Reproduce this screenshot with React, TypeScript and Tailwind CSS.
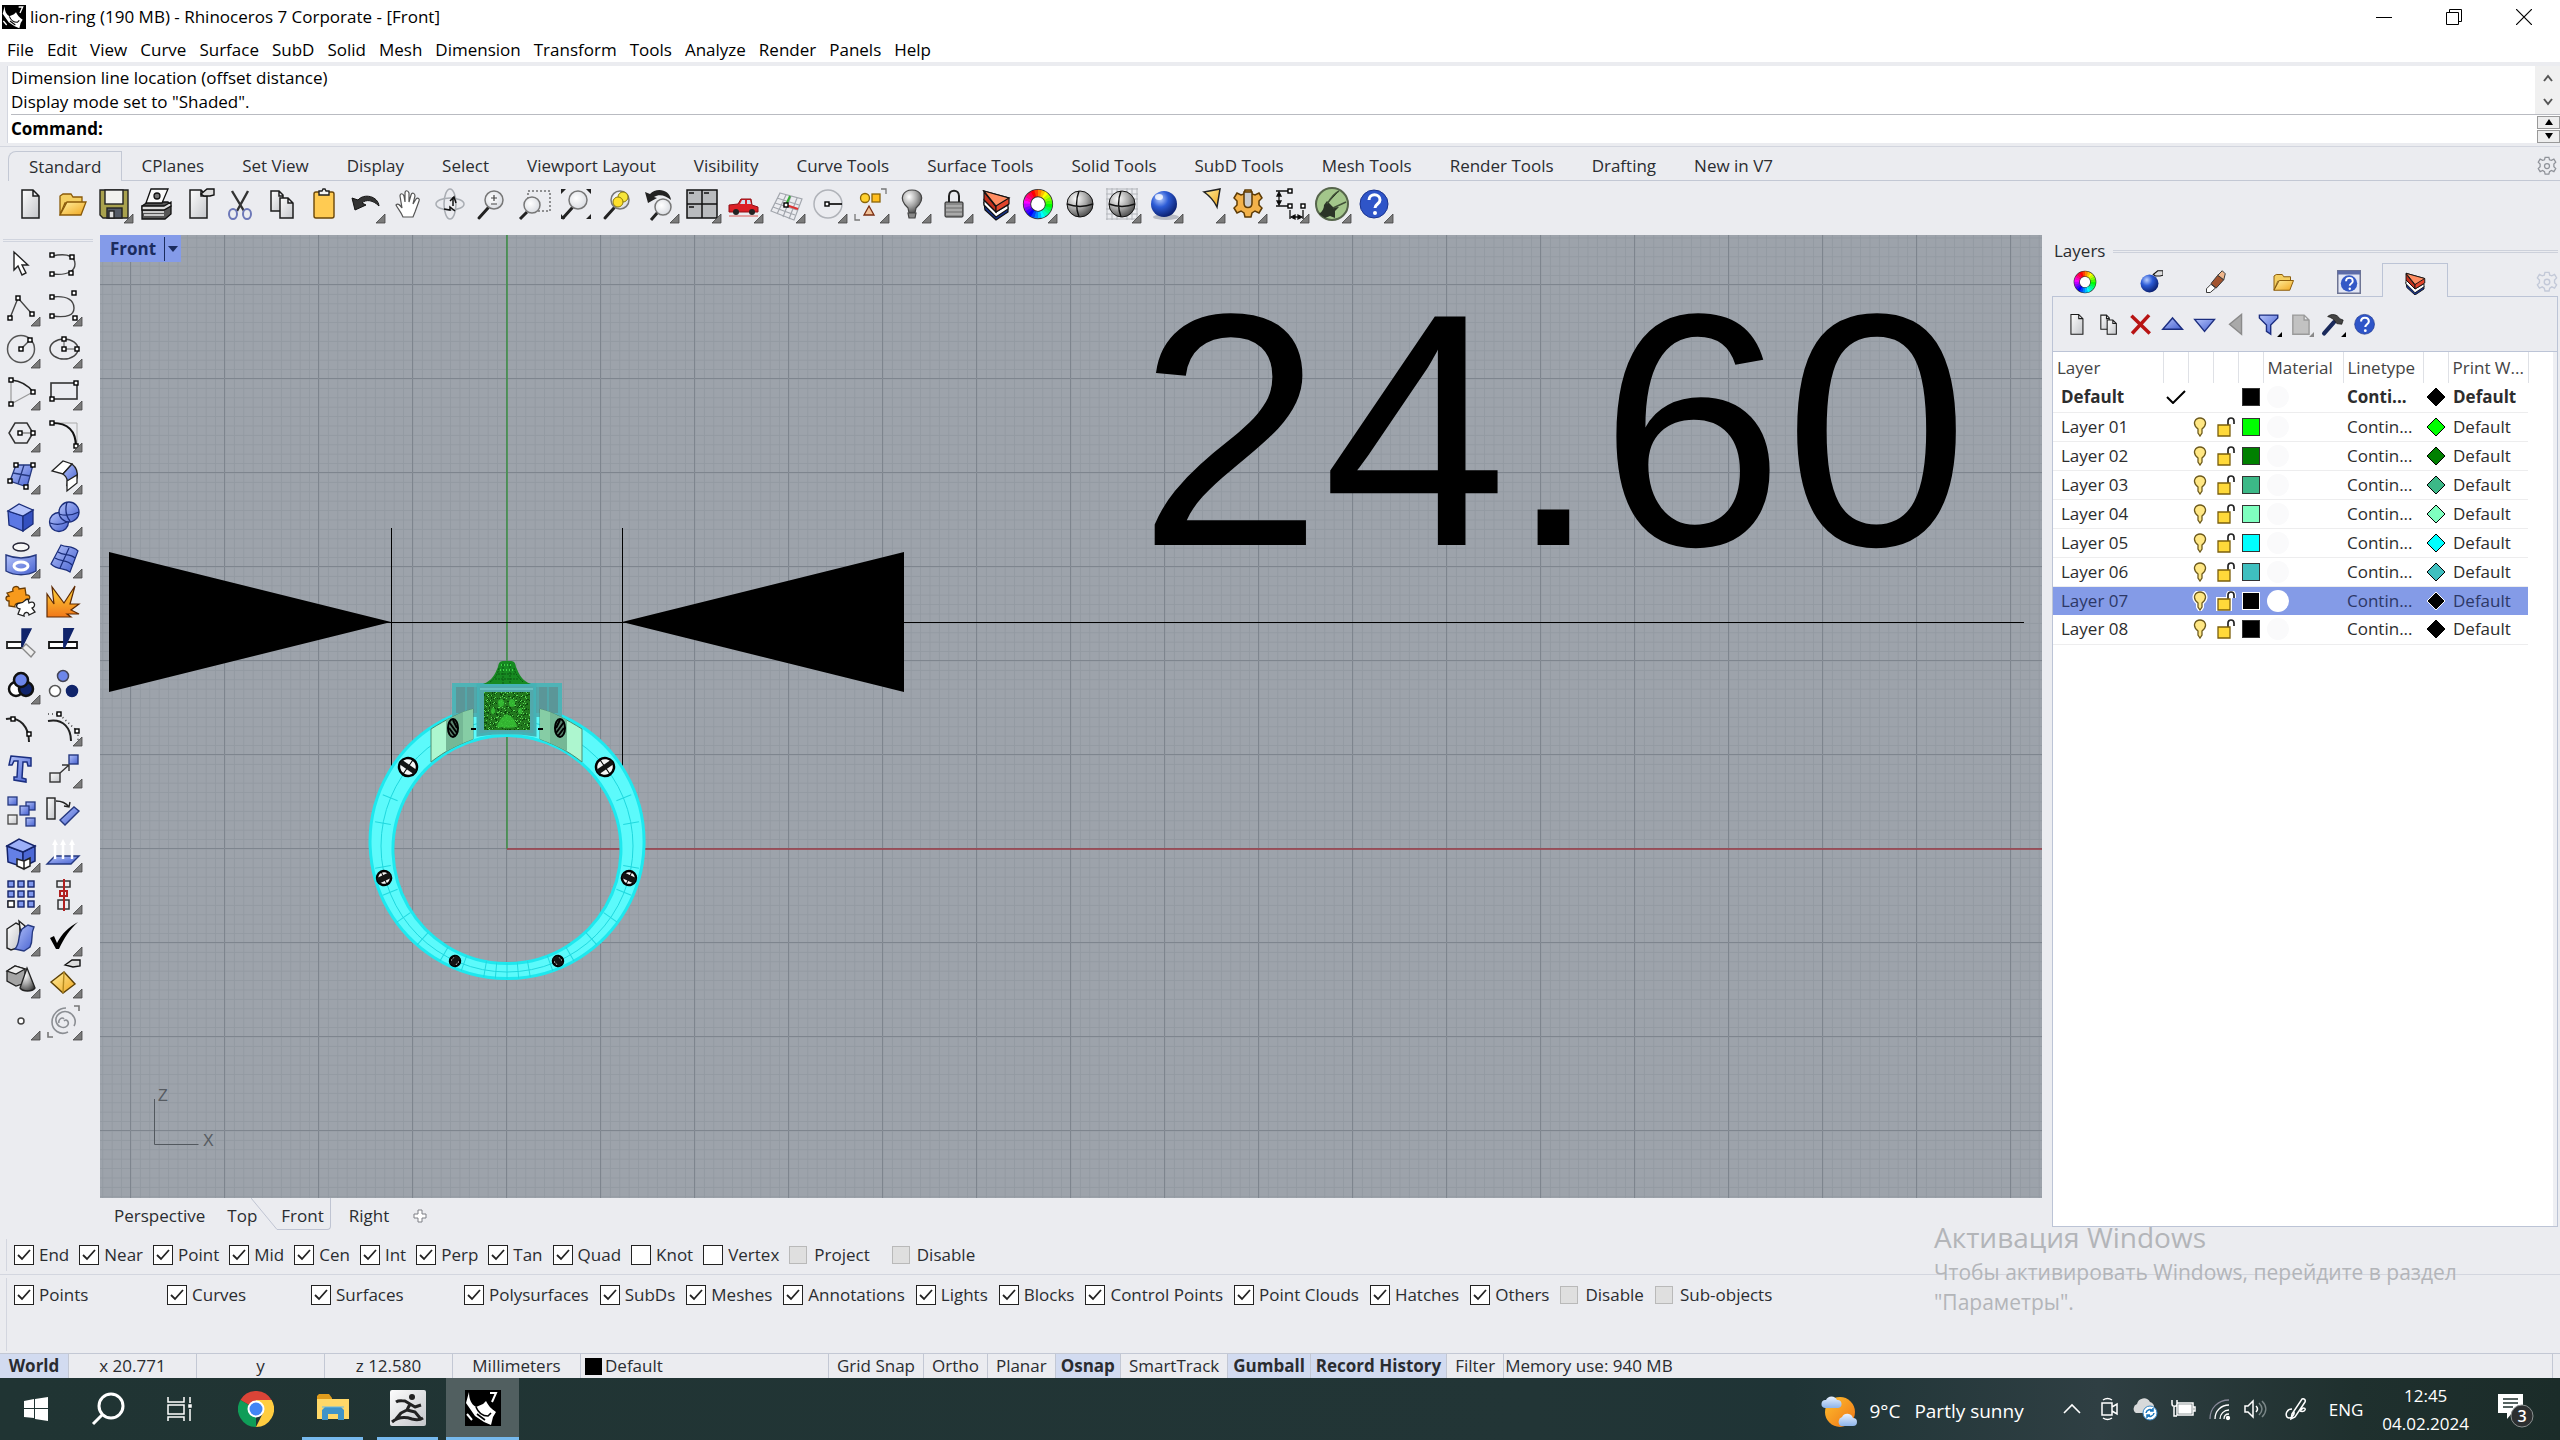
import React from 'react';

type Icon = React.ReactNode;

interface Tool {
  name: string;
  icon: Icon;
  more?: boolean;
}

interface Layer {
  name: string;
  color: string;
  current?: boolean;
  selected?: boolean;
}

interface Snap {
  label: string;
  state: 'on' | 'off' | 'disabled';
  wide?: string;
}

const K = '#1c1c1c';
const DARK = '#10246b';

/* Small square handle used by most of the curve icons */
function Pt({ x, y }: { x: number; y: number }) {
  return <rect x={x - 2} y={y - 2} width="4" height="4" fill="#fff" stroke="#000" strokeWidth="1.4" />;
}

function Defs() {
  return (
    <svg width="0" height="0" className="absolute" aria-hidden="true">
      <defs>
        <linearGradient id="blue" x1="0" y1="0" x2="1" y2="1">
          <stop offset="0" stopColor="#b4c3fa" />
          <stop offset="1" stopColor="#4560d0" />
        </linearGradient>
        <linearGradient id="paper" x1="0" y1="0" x2="1" y2="1">
          <stop offset="0" stopColor="#fdfdfd" />
          <stop offset="1" stopColor="#c4c6ca" />
        </linearGradient>
        <linearGradient id="gold" x1="0" y1="0" x2="1" y2="1">
          <stop offset="0" stopColor="#fff0a0" />
          <stop offset="1" stopColor="#f0a61e" />
        </linearGradient>
        <linearGradient id="fire" x1="0" y1="0" x2="0" y2="1">
          <stop offset="0" stopColor="#ffd83a" />
          <stop offset="1" stopColor="#f0781a" />
        </linearGradient>
        <radialGradient id="ball" cx="0.35" cy="0.3" r="0.8">
          <stop offset="0" stopColor="#ffffff" />
          <stop offset="0.5" stopColor="#a8a8a8" />
          <stop offset="1" stopColor="#3a3a3a" />
        </radialGradient>
        <radialGradient id="blueball" cx="0.35" cy="0.3" r="0.8">
          <stop offset="0" stopColor="#b8ceff" />
          <stop offset="0.4" stopColor="#2d5cd6" />
          <stop offset="1" stopColor="#04145c" />
        </radialGradient>
        <radialGradient id="lens" cx="0.4" cy="0.4" r="0.7">
          <stop offset="0" stopColor="#ffffff" />
          <stop offset="1" stopColor="#d5d8de" />
        </radialGradient>
        <linearGradient id="sun" x1="0" y1="0" x2="1" y2="1">
          <stop offset="0" stopColor="#ffc02e" />
          <stop offset="1" stopColor="#ee7416" />
        </linearGradient>
        <linearGradient id="cloud" x1="0" y1="0" x2="0" y2="1">
          <stop offset="0" stopColor="#e8f1ff" />
          <stop offset="1" stopColor="#8db4ea" />
        </linearGradient>
      </defs>
    </svg>
  );
}

function Wheel({ r }: { r: number }) {
  const arc = (2 * Math.PI * r) / 24;
  return (
    <g>
      <circle cx="16" cy="16" r={r} fill="#fff" stroke="#333" strokeWidth={r * 0.75} />
      {Array.from({ length: 24 }, (_, i) => (
        <circle
          key={i}
          cx="16"
          cy="16"
          r={r}
          fill="none"
          stroke={`hsl(${(i * 15 + 300) % 360} 100% 50%)`}
          strokeWidth={r * 0.6}
          strokeDasharray={`${arc + 0.4} 200`}
          transform={`rotate(${i * 15 + 180} 16 16)`}
        />
      ))}
    </g>
  );
}

const page = <path d="M8 2h11l6 6v22H8z M19 2v6h6" fill="url(#paper)" stroke={K} strokeWidth="1.5" />;
const folder = (
  <g stroke="#8a5a08" strokeWidth="1.3">
    <path d="M4 27V8l3-2h8l2 3h9v6H9z" fill="#f4cf62" />
    <path d="M4 27l7-13h19l-5 13z" fill="url(#gold)" />
  </g>
);
const pages = (
  <g fill="url(#paper)" stroke={K} strokeWidth="1.5">
    <path d="M5 3h8l4 4v16H5z M13 3v5h4" />
    <path d="M14 10h8l5 5v15H14z M22 10v5h5" />
  </g>
);
const lens = (
  <g>
    <path d="M12 20L3 30" stroke="#222" strokeWidth="3" strokeLinecap="round" />
    <circle cx="18" cy="12" r="9" fill="url(#lens)" stroke="#777" strokeWidth="1.5" />
  </g>
);
const cake = (
  <g stroke="#111" strokeWidth="1.2">
    <path d="M4 15l12 13 12-8v4l-12 8L5 22z" fill="#16338f" />
    <path d="M4 12l12 12 12-7v4l-12 8L4 17z" fill="#fff" />
    <path d="M4 4l12 15v5L4 12z" fill="#c2301c" />
    <path d="M4 3l25 7v6l-13 8v-6z" fill="#e2452c" />
    <path d="M4 3l25 7-13 8z" fill="#ff8d62" />
  </g>
);
const help = (
  <g>
    <circle cx="16" cy="16" r="14" fill="#2f55c8" stroke="#1b348f" />
    <path d="M11 12c0-7 11-7 11 0 0 4-5 4-5 8" fill="none" stroke="#fff" strokeWidth="3" />
    <circle cx="17" cy="25" r="2" fill="#fff" />
  </g>
);
const gearPath =
  'M13 2h6l1 4 3 1 4-2 3 5-3 3v4l3 3-3 5-4-2-3 2-1 4h-6l-1-4-3-2-4 2-3-5 3-3v-4l-3-3 3-5 4 2 3-1z';
const hand = <path d="M19 6l6-5h7v6l-4 1h-6z" fill="#ddd" stroke="#111" strokeWidth="1.4" />;
const bulb = (
  <g stroke="#444" strokeWidth="1.2">
    <path d="M12 20C1 10 8 2 16 2s15 8 4 18l-1 5h-6z" fill="url(#ball)" />
    <path d="M12 25h8l-1 5h-6z" fill="#888" />
  </g>
);

const mainTools: Tool[] = [
  { name: 'New', icon: page },
  { name: 'Open', icon: folder },
  {
    name: 'Save',
    more: true,
    icon: (
      <g stroke="#222" strokeWidth="1.4">
        <path d="M2 2h28v28H5l-3-3z" fill="#a9a24e" />
        <rect x="7" y="2" width="18" height="14" fill="#f2f2ee" />
        <rect x="9" y="20" width="15" height="10" fill="#555b66" />
        <rect x="11" y="23" width="5" height="7" fill="#ddd" />
      </g>
    ),
  },
  {
    name: 'Print',
    icon: (
      <g stroke="#111" strokeWidth="1.3">
        <path d="M2 18l6-4h20l3 4v8l-6 5H2z" fill="#555" />
        <path d="M2 18h22l7-4v4l-7 4H2z" fill="#ddd" />
        <path d="M6 15L11 1h17l-6 14z" fill="#fafafa" />
        <circle cx="17" cy="8" r="3" fill="#777" />
        <path d="M3 24h21M4 27h20" stroke="#eee" />
      </g>
    ),
  },
  { name: 'Document properties', icon: <g>{page}{hand}</g> },
  {
    name: 'Cut',
    icon: (
      <g fill="none" strokeWidth="2">
        <path d="M8 3l12 20M24 3L13 23" stroke="#333" strokeWidth="2.4" />
        <ellipse cx="9" cy="26" rx="4" ry="5" stroke="#6d78b8" />
        <ellipse cx="23" cy="26" rx="4" ry="5" stroke="#6d78b8" />
      </g>
    ),
  },
  { name: 'Copy', icon: pages },
  {
    name: 'Paste',
    icon: (
      <g stroke="#6b4708" strokeWidth="1.4">
        <rect x="6" y="4" width="20" height="26" rx="2" fill="#ffcb52" />
        <path d="M11 7V3h3l1-2h2l1 2h3v4z" fill="#f4f4f4" stroke="#222" />
      </g>
    ),
  },
  {
    name: 'Undo',
    more: true,
    icon: <path d="M2 10l3 12 11-5-4-2c4-4 11-3 17 3C28 8 14 5 8 12z" fill="#333" stroke="#111" />,
  },
  {
    name: 'Pan',
    icon: (
      <path
        d="M11 29c-2-5-5-8-7-12 2-2 4 0 6 3L8 8c0-3 3-3 4 0l1 6V5c0-3 3-3 4 0v9l2-7c1-3 4-2 4 1l-2 8 3-5c2-2 4 0 3 2l-4 11-2 5z"
        fill="#fff"
        stroke="#555"
        strokeWidth="1.2"
      />
    ),
  },
  {
    name: 'Rotate view',
    icon: (
      <g fill="none" stroke="#a9adb3" strokeWidth="1.5">
        <ellipse cx="16" cy="16" rx="14" ry="6" />
        <ellipse cx="16" cy="16" rx="6" ry="15" />
        <path d="M10 21l6 1v-3l5 4M19 18V9M16 13l4-4 2 6" stroke="#111" />
      </g>
    ),
  },
  { name: 'Zoom dynamic', icon: <g>{lens}<path d="M15 10h6M18 7v6M15 16h6" stroke="#444" strokeWidth="1.2" /></g> },
  {
    name: 'Zoom window',
    icon: (
      <g>
        <rect x="10" y="3" width="22" height="20" fill="none" stroke="#333" strokeDasharray="2 2" />
        <path d="M9 24l-7 7" stroke="#222" strokeWidth="3" />
        <circle cx="14" cy="17" r="8" fill="url(#lens)" stroke="#777" strokeWidth="1.5" />
      </g>
    ),
  },
  {
    name: 'Zoom extents',
    icon: (
      <g>
        {lens}
        <path d="M1 6V1h5zM26 1h5v5zM31 26v5h-5zM1 26v5h4z" fill="#222" />
      </g>
    ),
  },
  {
    name: 'Zoom selected',
    icon: (
      <g>
        {lens}
        <circle cx="21" cy="9" r="5" fill="#f6e63a" stroke="#8a7a0a" />
        <circle cx="16" cy="14" r="5" fill="#ffe02a" stroke="#8a7a0a" />
      </g>
    ),
  },
  {
    name: 'Undo view change',
    more: true,
    icon: (
      <g>
        <path d="M14 24l-7 8" stroke="#222" strokeWidth="3" />
        <circle cx="19" cy="19" r="8" fill="url(#lens)" stroke="#777" strokeWidth="1.5" />
        <path d="M1 4l3 11 9-5-3-1c5-3 11-2 17 3C26 1 12-1 6 6z" fill="#222" />
      </g>
    ),
  },
  {
    name: '4 viewports',
    more: true,
    icon: (
      <g stroke="#111" strokeWidth="1.5">
        <rect x="1" y="2" width="30" height="28" fill="#b9bbbe" />
        <path d="M16 2v28M1 16h30M3 5h5M18 5h5M3 19h5" />
      </g>
    ),
  },
  {
    name: 'Set view',
    more: true,
    icon: (
      <g>
        <path d="M1 28h29" stroke="#e3a3a3" strokeWidth="2" />
        <path d="M1 17l9-1 3-5h10l1 6 6 2v5H1z" fill="#dc1f26" stroke="#8f1016" />
        <path d="M14 12h3v4h-5zM19 12h3l1 4h-4z" fill="#cde" />
        <circle cx="8" cy="24" r="3" fill="#222" />
        <circle cx="24" cy="24" r="3" fill="#222" />
      </g>
    ),
  },
  {
    name: 'Set CPlane',
    more: true,
    icon: (
      <g fill="none" stroke="#a2a6ad" strokeWidth="1.2">
        <path d="M10 5l22 6-8 21L1 23z M16 7L7 26M21 8l-8 21M27 10l-8 21M7 10l22 7M5 15l22 7M3 19l22 8" />
        <path d="M16 17l12 4" stroke="#d33" strokeWidth="2" />
        <path d="M16 17l4-9" stroke="#3a3" strokeWidth="2" />
        <Pt x={16} y={17} />
      </g>
    ),
  },
  {
    name: 'Set base',
    more: true,
    icon: (
      <g>
        <circle cx="16" cy="16" r="14" fill="none" stroke="#b0b3b9" strokeWidth="1.5" />
        <path d="M16 16h14" stroke="#000" strokeWidth="1.6" />
        <Pt x={15} y={16} />
      </g>
    ),
  },
  {
    name: 'Select all',
    more: true,
    icon: (
      <g stroke="#8a6508" strokeWidth="1.3">
        <circle cx="11" cy="10" r="4.5" fill="#ffd12e" />
        <rect x="18" y="6" width="8" height="8" fill="#ffbe1e" />
        <path d="M15 18l5 9H10z" fill="#f1c29a" stroke="#7a2d10" />
        <path d="M27 1h5v5M1 26v6h5" fill="none" stroke="#777" />
      </g>
    ),
  },
  { name: 'Hide', more: true, icon: bulb },
  {
    name: 'Lock',
    more: true,
    icon: (
      <g>
        <path d="M11 15V8c0-7 10-7 10 0v7" fill="none" stroke="#222" strokeWidth="2" />
        <rect x="7" y="14" width="18" height="15" rx="1" fill="#8a8a8a" stroke="#222" />
        <path d="M8 18h16M8 22h16M8 26h16" stroke="#c8c8c8" />
      </g>
    ),
  },
  { name: 'Layers', more: true, icon: cake },
  { name: 'Properties', more: true, icon: <Wheel r={11} /> },
  {
    name: 'Shade',
    icon: (
      <g>
        <circle cx="16" cy="16" r="13" fill="url(#ball)" stroke="#111" />
        <path d="M3 16c8 3 18 3 26 0M15 3c-3 8-3 18 0 26" fill="none" stroke="#111" strokeWidth="1.4" />
      </g>
    ),
  },
  {
    name: 'Shade selected',
    more: true,
    icon: (
      <g>
        <path d="M0 1h32M0 6h32M0 11h32M0 21h32M0 26h32M0 31h32M1 0v32M6 0v32M11 0v32M21 0v32M26 0v32M31 0v32" stroke="#b3b6bb" />
        <circle cx="16" cy="16" r="13" fill="url(#ball)" stroke="#111" />
        <path d="M3 16c8 3 18 3 26 0M15 3c-3 8-3 18 0 26" fill="none" stroke="#111" strokeWidth="1.4" />
      </g>
    ),
  },
  {
    name: 'Render',
    more: true,
    icon: (
      <g>
        <ellipse cx="18" cy="29" rx="13" ry="3" fill="#b9bcc4" />
        <circle cx="16" cy="16" r="13" fill="url(#blueball)" />
        <ellipse cx="11" cy="9" rx="4" ry="3" fill="#fff" opacity="0.8" />
      </g>
    ),
  },
  {
    name: 'Edit spotlight',
    more: true,
    icon: <path d="M14 4l16-3-3 18c-3-6-7-11-13-15z" fill="url(#gold)" stroke="#222" strokeWidth="1.5" />,
  },
  {
    name: 'Options',
    more: true,
    icon: (
      <g stroke="#5d3b06" strokeWidth="1.5">
        <path d={gearPath} fill="#f3b24a" />
        <path d="M12 4v11c0 6 8 6 8 0V4z" fill="#c9cbce" />
      </g>
    ),
  },
  {
    name: 'Dimension',
    more: true,
    icon: (
      <g stroke="#111" strokeWidth="1.3">
        <path d="M2 3h14M2 18h14M5 6v9M16 22v9M29 22v9M19 29h8" />
        <path d="M5 4l-2 4h4zM5 17l-2-4h4zM17 29l4-2v4zM28 29l-4-2v4z" />
        <Pt x={16} y={3} />
        <Pt x={16} y={18} />
        <Pt x={29} y={18} />
      </g>
    ),
  },
  {
    name: 'Grasshopper',
    more: true,
    icon: (
      <g>
        <circle cx="16" cy="16" r="16" fill="#a3c68b" stroke="#56654c" strokeWidth="2" />
        <path d="M3 26c4-3 5-6 5-9l3-4 4 4c3 4 5 2 8 2l-4 4v7l-5-2-5 2z" fill="#2b3327" />
        <path d="M11 16C16 8 19 5 23 3M17 20l13-6" stroke="#415138" strokeWidth="1.4" />
      </g>
    ),
  },
  { name: 'Help', more: true, icon: help },
];

const sideTools: Tool[] = [
  { name: 'Select', icon: <path d="M9 3v18l4-4 4 9 4-2-4-8h6z" fill="#fff" stroke="#222" strokeWidth="1.4" /> },
  {
    name: 'Curve interpolate',
    icon: (
      <g fill="none" stroke="#444" strokeWidth="1.4">
        <path d="M5 7c18-4 23 2 23 8s-6 12-23 10" />
        <Pt x={5} y={6} /><Pt x={25} y={8} /><Pt x={24} y={24} /><Pt x={5} y={25} />
      </g>
    ),
  },
  {
    name: 'Polyline',
    more: true,
    icon: (
      <g fill="none" stroke="#444" strokeWidth="1.4">
        <path d="M5 27l8-20 14 16" />
        <Pt x={5} y={27} /><Pt x={13} y={7} /><Pt x={27} y={23} />
      </g>
    ),
  },
  {
    name: 'Curve',
    more: true,
    icon: (
      <g fill="none" stroke="#444" strokeWidth="1.4">
        <path d="M5 6c16-2 22 4 22 11s-6 10-22 8" />
        <Pt x={5} y={6} /><Pt x={27} y={2} /><Pt x={28} y={27} /><Pt x={5} y={25} />
      </g>
    ),
  },
  {
    name: 'Circle',
    more: true,
    icon: (
      <g fill="none" stroke="#555" strokeWidth="1.5">
        <circle cx="16" cy="16" r="13.5" />
        <path d="M16 16l9-9" />
        <Pt x={16} y={16} /><Pt x={25} y={7} />
      </g>
    ),
  },
  {
    name: 'Ellipse',
    more: true,
    icon: (
      <g fill="none" stroke="#444" strokeWidth="1.5">
        <ellipse cx="17" cy="16" rx="14" ry="10" />
        <path d="M17 16V7M17 16h13" stroke="#888" />
        <Pt x={17} y={16} /><Pt x={17} y={6} /><Pt x={30} y={16} />
      </g>
    ),
  },
  {
    name: 'Arc',
    more: true,
    icon: (
      <g fill="none" stroke="#999" strokeWidth="1.2">
        <path d="M6 5v24l22-12" />
        <path d="M6 5c10 1 17 5 22 12" stroke="#222" strokeWidth="1.6" />
        <Pt x={6} y={5} /><Pt x={6} y={29} /><Pt x={28} y={17} />
      </g>
    ),
  },
  {
    name: 'Rectangle',
    more: true,
    icon: (
      <g>
        <rect x="4" y="8" width="26" height="16" fill="none" stroke="#333" strokeWidth="1.6" />
        <Pt x={29} y={8} /><Pt x={5} y={24} />
      </g>
    ),
  },
  {
    name: 'Polygon',
    more: true,
    icon: (
      <g fill="none" stroke="#333" strokeWidth="1.5">
        <path d="M10 6h12l6 10-6 10H10L4 16z" />
        <path d="M16 16h12" stroke="#888" />
        <Pt x={15} y={16} /><Pt x={28} y={16} />
      </g>
    ),
  },
  {
    name: 'Fillet',
    more: true,
    icon: (
      <g fill="none">
        <path d="M5 6h25v24" stroke="#aaa" />
        <path d="M5 6c16 0 24 7 24 24" stroke="#111" strokeWidth="2.2" />
        <Pt x={5} y={6} /><Pt x={29} y={29} />
      </g>
    ),
  },
  {
    name: 'Surface from points',
    more: true,
    icon: (
      <g stroke="#25387f" strokeWidth="1.3">
        <path d="M11 6h17l-6 22L5 22z" fill="url(#blue)" />
        <path d="M19 6l-6 19M8 14l17 3" fill="none" />
        <Pt x={11} y={6} /><Pt x={28} y={6} /><Pt x={21} y={28} /><Pt x={5} y={22} />
      </g>
    ),
  },
  {
    name: 'Fillet surface',
    more: true,
    icon: (
      <g stroke="#222" strokeWidth="1.3">
        <path d="M5 12L16 2l9 3-9 10z" fill="#fff" />
        <path d="M16 15l9-10c5 4 6 9 5 14l-10 7c1-4 0-8-4-11z" fill="url(#blue)" />
        <path d="M20 22l10-6v8l-10 8z" fill="#fff" />
      </g>
    ),
  },
  {
    name: 'Box',
    more: true,
    icon: (
      <g stroke="#1a2d7a" strokeWidth="1.3">
        <path d="M3 10l15 5v15L4 24z" fill="#5c78e4" />
        <path d="M18 15l10-6v14l-10 7z" fill="#3450bf" />
        <path d="M3 10l11-7 14 6-10 6z" fill="#b5c4fb" />
      </g>
    ),
  },
  {
    name: 'Sphere union',
    more: true,
    icon: (
      <g stroke="#1a2d7a" strokeWidth="1.3">
        <circle cx="12" cy="21" r="9.5" fill="url(#blue)" />
        <circle cx="22" cy="11" r="10" fill="url(#blue)" />
        <path d="M12 13c6 2 12 2 20-2M20 1c-2 7-1 14 3 19M3 22c6 2 11 2 17-1" fill="none" />
      </g>
    ),
  },
  {
    name: 'Project curve',
    more: true,
    icon: (
      <g stroke="#223" strokeWidth="1.4">
        <ellipse cx="16" cy="4" rx="8" ry="4" fill="#f7f7f7" />
        <path d="M1 12c10 4 20 4 30 0v16c-9 5-21 5-30 0z" fill="url(#blue)" stroke="#25387f" />
        <ellipse cx="16" cy="23" rx="7" ry="4" fill="none" stroke="#fff" strokeWidth="3" />
      </g>
    ),
  },
  {
    name: 'Mesh',
    more: true,
    icon: (
      <g stroke="#1a2d7a" strokeWidth="1.2">
        <path d="M14 2c6 3 11 0 17 6l-8 21c-6-5-12-1-19-8z" fill="url(#blue)" />
        <path d="M11 9c6 4 12 1 17 6M8 15c6 4 12 1 17 7M22 5l-9 20" fill="none" />
      </g>
    ),
  },
  {
    name: 'Join',
    icon: (
      <g strokeWidth="1.3">
        <path d="M2 8l6-2c-2-5 6-6 6-2l6-1 1 7c5-1 5 6 0 5l1 5-7 1c0-4-6-3-5 1l-6-1 0-5c-4 0-4-5 0-5z" fill="#f79a1c" stroke="#6b3d04" />
        <path d="M15 18c5 0 4-4 8-4l1 4c5-3 8 3 3 5l3 4-6 3c0-4-6-3-5 1l-6-2 2-5c-5-1-4-6 0-6z" fill="#fff" stroke="#222" />
      </g>
    ),
  },
  {
    name: 'Explode',
    icon: <path d="M0 32V9l7 10L5 2l12 16L28 1l-5 18 9 0-8 6 8 4H20l4 3z" fill="url(#fire)" stroke="#5e2a04" strokeWidth="1.2" />,
  },
  {
    name: 'Trim',
    icon: (
      <g stroke="#222" strokeWidth="1.4">
        <path d="M2 15h15v6H2z" fill="#fff" strokeWidth="1.8" />
        <path d="M17 21l4-4 9 8-4 5z" fill="#eee" stroke="#888" />
        <path d="M17 2h9l-9 18z" fill={DARK} stroke={DARK} />
      </g>
    ),
  },
  {
    name: 'Split',
    icon: (
      <g stroke="#111" strokeWidth="1.8">
        <path d="M2 15h28v6H2z" fill="#fff" />
        <path d="M17 2h9l-9 19z" fill={DARK} stroke={DARK} />
      </g>
    ),
  },
  {
    name: 'Group',
    more: true,
    icon: (
      <g stroke="#111" strokeWidth="2.5">
        <circle cx="11" cy="20" r="7" fill="#fff" />
        <circle cx="21" cy="20" r="7" fill={DARK} />
        <circle cx="16" cy="11" r="7" fill="#6d86ea" />
      </g>
    ),
  },
  {
    name: 'Ungroup',
    icon: (
      <g strokeWidth="1.5">
        <circle cx="16" cy="7" r="5.5" fill="#6d86ea" stroke="#445" />
        <circle cx="8" cy="22" r="5.5" fill="#fff" stroke="#555" />
        <circle cx="25" cy="22" r="5.5" fill={DARK} stroke={DARK} />
      </g>
    ),
  },
  {
    name: 'Edit points on',
    icon: (
      <g>
        <path d="M1 8c14-3 23 8 23 23" fill="none" stroke="#222" strokeWidth="2" />
        <Pt x={8} y={8} /><Pt x={24} y={23} />
      </g>
    ),
  },
  {
    name: 'Control points on',
    more: true,
    icon: (
      <g fill="none">
        <path d="M1 10c16-3 23 8 23 20" stroke="#222" strokeWidth="2" />
        <path d="M1 3h11l19 18v10" stroke="#444" strokeDasharray="1 3" strokeWidth="1.6" />
        <Pt x={12} y={3} /><Pt x={30} y={20} />
      </g>
    ),
  },
  {
    name: 'Text object',
    icon: (
      <path
        d="M6 3l20 2v8h-3l-1-4h-4l-1 16 4 1v3l-12-2v-3h3l1-16H9l-2 4H4z"
        fill="url(#blue)"
        stroke="#1b2f80"
        strokeWidth="1.5"
      />
    ),
  },
  {
    name: 'Move',
    more: true,
    icon: (
      <g stroke="#333" strokeWidth="1.4">
        <rect x="3" y="20" width="10" height="9" fill="url(#paper)" />
        <rect x="22" y="2" width="9" height="9" fill="url(#blue)" stroke="#25387f" />
        <path d="M13 20l9-8M15 12h7v6" fill="none" />
      </g>
    ),
  },
  {
    name: 'Copy objects',
    icon: (
      <g stroke="#25387f" strokeWidth="1.3" fill="url(#blue)">
        <rect x="3" y="2" width="9" height="8" />
        <rect x="21" y="7" width="9" height="8" />
        <rect x="15" y="11" width="9" height="9" />
        <rect x="21" y="23" width="9" height="8" />
        <rect x="3" y="20" width="9" height="9" fill="url(#paper)" stroke="#444" />
      </g>
    ),
  },
  {
    name: 'Rotate',
    icon: (
      <g stroke="#222" strokeWidth="1.4">
        <rect x="0" y="3" width="8" height="21" fill="url(#paper)" />
        <path d="M13 25L27 12l5 4-14 14z" fill="url(#blue)" stroke="#25387f" />
        <path d="M9 6c6 0 10 2 13 6M17 11l5 1 1-5" fill="none" />
      </g>
    ),
  },
  {
    name: 'Boolean',
    more: true,
    icon: (
      <g stroke="#15246a" strokeWidth="1.5">
        <path d="M2 9l16 6v15L3 25z" fill="#6480e6" />
        <path d="M18 15l12-6v15l-12 6z" fill="#4c68d6" />
        <path d="M2 9l12-7 16 7-12 6z" fill="#9db0f8" />
        <path d="M12 22l7 2v8l-7-3zM19 24l6-3v8l-6 3z" fill="#fff" stroke="#222" />
      </g>
    ),
  },
  {
    name: 'Extrude',
    more: true,
    icon: (
      <g>
        <path d="M8 19h24l-8 8H0z" fill="url(#blue)" stroke="#25387f" strokeWidth="1.4" />
        <path d="M8 22V7M16 22V7M25 22V7" stroke="#fff" strokeWidth="2.5" />
        <path d="M8 2l3 6H5zM16 2l3 6h-6zM25 2l3 6h-6z" fill="#fff" />
      </g>
    ),
  },
  {
    name: 'Array',
    more: true,
    icon: (
      <g stroke="#15246a" strokeWidth="1.4" fill="#7f97ec">
        {[3, 13, 23].map((x) => [2, 12, 22].map((y) => <rect key={`${x}-${y}`} x={x} y={y} width="6" height="6" />))}
        <rect x="3" y="22" width="6" height="6" fill="#fff" stroke="#222" />
      </g>
    ),
  },
  {
    name: 'Align',
    more: true,
    icon: (
      <g fill="none" stroke="#333" strokeWidth="1.5">
        <rect x="10" y="2" width="13" height="6" />
        <rect x="11" y="21" width="11" height="9" />
        <path d="M17 0v32M13 12h7v5h-7z" stroke="#b02020" strokeWidth="2" />
      </g>
    ),
  },
  {
    name: 'Flow along surface',
    more: true,
    icon: (
      <g stroke="#222" strokeWidth="1.4">
        <path d="M2 8l9-6 4 2v22l-9 3-4-2z" fill="url(#paper)" />
        <path d="M14 0l6 5-4 8z" fill="#eee" />
        <path d="M17 8l6-4 6 2c-4 8 0 12-4 20l-6 4-9-2c6-7 2-13 7-20z" fill="url(#blue)" stroke="#25387f" />
      </g>
    ),
  },
  {
    name: 'Check',
    more: true,
    icon: <path d="M3 17l4-2 3 7C15 12 22 6 31 1 23 8 17 17 12 28H9z" fill="#000" />,
  },
  {
    name: 'Primitives',
    more: true,
    icon: (
      <g stroke="#222" strokeWidth="1.3">
        <path d="M2 8l8-5 10 3v14l-9 3-9-5z" fill="#a5a5a5" />
        <path d="M2 8l8-5 10 3-9 5z" fill="#eee" />
        <path d="M22 5l8 20c-3 4-12 4-15 0z" fill="url(#ball)" />
      </g>
    ),
  },
  {
    name: 'Gumball',
    more: true,
    icon: (
      <g stroke="#5e4206" strokeWidth="1.4">
        <path d="M4 19l13-10 11 12-12 9z" fill="url(#gold)" />
        <path d="M17 9l-1 21" stroke="#b58a20" />
        <path d="M18 2l7-5h8v6l-7 1z" fill="#ddd" stroke="#111" />
      </g>
    ),
  },
  { name: 'Point', more: true, icon: <circle cx="16" cy="16" r="3" fill="#fff" stroke="#444" strokeWidth="1.5" /> },
  {
    name: 'Spiral',
    more: true,
    icon: (
      <g fill="none" stroke="#8b8e93" strokeWidth="1.6">
        <path d="M17 16c3-3 6 2 3 5s-10 1-11-5 6-11 12-9 9 9 6 14M17 14c-2-3-6 1-5 4M21 27c-8 4-16-2-16-10S12 3 19 3" />
        <path d="M27 1h5v5M1 27v5h5" stroke="#777" />
      </g>
    ),
  },
];

const panelTabs: Tool[] = [
  { name: 'Properties', icon: <Wheel r={11} /> },
  {
    name: 'Materials',
    icon: <g><circle cx="14" cy="18" r="12" fill="url(#blueball)" />{hand}</g>,
  },
  {
    name: 'Libraries',
    icon: (
      <g stroke="#333" strokeWidth="1.3">
        <path d="M2 25l6-6 6 5-7 6-5 0z" fill="#fff" />
        <path d="M8 18l9-11 8 6-10 11z" fill="#a2542f" />
        <path d="M17 7l6-6 4 4-2 8z" fill="#f0b78c" />
      </g>
    ),
  },
  { name: 'Files', icon: folder },
  {
    name: 'Help panel',
    icon: (
      <g>
        <rect x="1" y="1" width="30" height="30" fill="#e3e7f5" stroke="#6e7594" strokeWidth="2" />
        <rect x="1" y="1" width="30" height="5" fill="#5d6ca8" />
        <circle cx="16" cy="18" r="11" fill="#3459c6" />
        <path d="M12 15c0-6 9-6 9 0 0 3-4 3-4 6" fill="none" stroke="#fff" strokeWidth="2.5" />
        <circle cx="17" cy="25" r="1.6" fill="#fff" />
      </g>
    ),
  },
  { name: 'Layers panel', icon: cake },
];

const layerTools: Tool[] = [
  { name: 'New layer', icon: page },
  { name: 'New sublayer', icon: pages },
  { name: 'Delete', icon: <path d="M3 4l26 25M28 3L4 29" stroke="#b81414" strokeWidth="5" /> },
  { name: 'Move up', icon: <path d="M16 7l14 16H2z" fill="url(#blue)" stroke="#1c2e80" strokeWidth="2" /> },
  { name: 'Move down', icon: <path d="M16 26L30 9H2z" fill="url(#blue)" stroke="#1c2e80" strokeWidth="2" /> },
  { name: 'Parent', icon: <path d="M6 16L23 2v28z" fill="#a9a9a9" stroke="#8a8a8a" strokeWidth="2" /> },
  {
    name: 'Filter',
    more: true,
    icon: <path d="M3 3h26v4L19 17v13l-6-4v-9L3 7z" fill="url(#blue)" stroke="#1c2e80" strokeWidth="2" />,
  },
  {
    name: 'State',
    more: true,
    icon: <path d="M5 3h16l7 7v20H5z M21 3v7h7" fill="#c2c2c2" stroke="#9a9a9a" strokeWidth="2" />,
  },
  {
    name: 'Tools',
    more: true,
    icon: (
      <g>
        <path d="M4 29L18 13" stroke="#1a2a5c" strokeWidth="6" strokeLinecap="round" />
        <path d="M9 5c6-5 14-3 17 3l5 2-2 6-7-1-4-5c-3-3-6-4-9-5z" fill="#444" stroke="#111" />
      </g>
    ),
  },
  { name: 'Layer help', icon: help },
];

const layers: Layer[] = [
  { name: 'Default', color: '#000000', current: true },
  { name: 'Layer 01', color: '#00ff00' },
  { name: 'Layer 02', color: '#008000' },
  { name: 'Layer 03', color: '#3cb887' },
  { name: 'Layer 04', color: '#7fffbf' },
  { name: 'Layer 05', color: '#00ffff' },
  { name: 'Layer 06', color: '#3fbfbf' },
  { name: 'Layer 07', color: '#000000', selected: true },
  { name: 'Layer 08', color: '#000000' },
];

const menus = ['File', 'Edit', 'View', 'Curve', 'Surface', 'SubD', 'Solid', 'Mesh', 'Dimension', 'Transform', 'Tools', 'Analyze', 'Render', 'Panels', 'Help'];

const tabs = ['Standard', 'CPlanes', 'Set View', 'Display', 'Select', 'Viewport Layout', 'Visibility', 'Curve Tools', 'Surface Tools', 'Solid Tools', 'SubD Tools', 'Mesh Tools', 'Render Tools', 'Drafting', 'New in V7'];

const osnaps: Snap[] = [
  ...['End', 'Near', 'Point', 'Mid', 'Cen', 'Int', 'Perp', 'Tan', 'Quad'].map((label): Snap => ({ label, state: 'on' })),
  { label: 'Knot', state: 'off' },
  { label: 'Vertex', state: 'off' },
  { label: 'Project', state: 'disabled', wide: 'pr-3' },
  { label: 'Disable', state: 'disabled' },
];

const filters: Snap[] = [
  { label: 'Points', state: 'on', wide: 'w-[142px]' },
  { label: 'Curves', state: 'on', wide: 'w-[133px]' },
  { label: 'Surfaces', state: 'on', wide: 'w-[142px]' },
  ...['Polysurfaces', 'SubDs', 'Meshes', 'Annotations', 'Lights', 'Blocks', 'Control Points', 'Point Clouds', 'Hatches', 'Others'].map(
    (label): Snap => ({ label, state: 'on' }),
  ),
  { label: 'Disable', state: 'disabled' },
  { label: 'Sub-objects', state: 'disabled' },
];

const modes = [
  { label: 'Grid Snap' },
  { label: 'Ortho' },
  { label: 'Planar' },
  { label: 'Osnap', on: true },
  { label: 'SmartTrack' },
  { label: 'Gumball', on: true },
  { label: 'Record History', on: true },
  { label: 'Filter' },
];

function ToolButton({ tool }: { tool: Tool }) {
  return (
    <button aria-label={tool.name} className="h-[42px] w-[42px] shrink-0">
      <svg viewBox="-5 -5 42 42" className="h-[42px] w-[42px]">
        {tool.icon}
        {tool.more && <path d="M35 26v9h-9z" fill="#7b7b7b" stroke="#444" strokeWidth="0.8" />}
      </svg>
    </button>
  );
}

function RhinoLogo({ className }: { className: string }) {
  return (
    <svg viewBox="0 0 36 36" className={className}>
      <rect width="36" height="36" fill="#000" />
      <path d="M4 2c0 7 2 12 7 15l7-3 3-3c2 4 5 8 10 11l-3 5-2 8-7-3-9-6L1 13z" fill="#fff" />
      <path d="M11 17c2 5 6 9 12 9l3-3M12 24l8 6" fill="none" stroke="#000" strokeWidth="1.6" />
      <path d="M2 24l5 6M25 3h6l-4 9" fill="none" stroke="#fff" strokeWidth="2" />
    </svg>
  );
}

function Gear({ className }: { className: string }) {
  return (
    <svg viewBox="0 0 32 32" className={className} fill="none" strokeWidth="2">
      <path d={gearPath} />
      <circle cx="16" cy="16" r="4" />
    </svg>
  );
}

function TitleBar() {
  return (
    <header className="bg-white text-black">
      <div className="flex h-[34px] items-center">
        <RhinoLogo className="mr-1 ml-[2px] h-6 w-6" />
        <h1 className="flex-1">lion-ring (190 MB) - Rhinoceros 7 Corporate - [Front]</h1>
        <div className="flex gap-[54px] pr-[28px]">
          <button aria-label="Minimize">
            <svg viewBox="0 0 16 16" className="h-4 w-4" stroke="#000"><path d="M0 8.5h16" /></svg>
          </button>
          <button aria-label="Restore">
            <svg viewBox="0 0 16 16" className="h-4 w-4" stroke="#000" fill="none"><path d="M.5 3.5h12v12H.5zM3.5 3.5v-3h12v12h-3" /></svg>
          </button>
          <button aria-label="Close">
            <svg viewBox="0 0 16 16" className="h-4 w-4" stroke="#000" strokeWidth="1.2"><path d="M0 0l16 16M16 0L0 16" /></svg>
          </button>
        </div>
      </div>
      <nav className="flex h-[28px] items-center gap-[13px] pt-[3px] pl-[7px]">
        {menus.map((m) => (
          <button key={m}>{m}</button>
        ))}
      </nav>
    </header>
  );
}

function CommandArea() {
  return (
    <section className="border-b border-[#d3d6df] pt-1 pb-[3px] pl-[7px]">
      <div className="border-l border-[#d3d6df] bg-white pl-[3px] text-black">
        <div className="flex border-b border-[#b9bbc1]">
          <div className="flex-1 leading-6">
            <p>Dimension line location (offset distance)</p>
            <p>Display mode set to &quot;Shaded&quot;.</p>
          </div>
          <div className="flex w-[25px] flex-col items-center justify-around bg-[#f0f0f0]">
            <button aria-label="Scroll up"><svg viewBox="0 0 10 8" className="h-2 w-[10px]" fill="none" stroke="#555" strokeWidth="2"><path d="M1 7l4-5 4 5" /></svg></button>
            <button aria-label="Scroll down"><svg viewBox="0 0 10 8" className="h-2 w-[10px]" fill="none" stroke="#555" strokeWidth="2"><path d="M1 1l4 5 4-5" /></svg></button>
          </div>
        </div>
        <div className="flex h-[28px] items-center">
          <label htmlFor="command" className="font-bold">Command:</label>
          <input id="command" className="ml-2 flex-1 outline-none" />
          <div className="flex flex-col gap-px">
            <button aria-label="Previous command" className="flex h-[13px] w-[23px] items-center justify-center border border-[#999] bg-[#eee]">
              <svg viewBox="0 0 8 6" className="h-[6px] w-2"><path d="M4 0l4 6H0z" /></svg>
            </button>
            <button aria-label="Next command" className="flex h-[13px] w-[23px] items-center justify-center border border-[#999] bg-[#eee]">
              <svg viewBox="0 0 8 6" className="h-[6px] w-2"><path d="M4 6L0 0h8z" /></svg>
            </button>
          </div>
        </div>
      </div>
    </section>
  );
}

function Toolbars() {
  return (
    <section className="pt-1 pl-2">
      <div className="flex h-[30px] items-end">
        {tabs.map((t, i) => (
          <button
            key={t}
            className={
              i === 0
                ? 'h-[30px] rounded-tl-lg border-t border-r border-l border-[#c3c8d4] px-5'
                : 'h-[30px] border-b border-[#c3c8d4] px-[19px]'
            }
          >
            {t}
          </button>
        ))}
        <div className="flex h-[30px] flex-1 items-center justify-end border-b border-[#c3c8d4] pr-[3px]">
          <button aria-label="Toolbar options"><Gear className="h-5 w-5 stroke-[#8f9299]" /></button>
        </div>
      </div>
      <div className="flex h-[54px] items-start pt-[2px] pl-px">
        {mainTools.map((t) => (
          <ToolButton key={t.name} tool={t} />
        ))}
      </div>
    </section>
  );
}

const stones = [
  { x: 408, y: 767, r: 9, bar: 5, a: 35 },
  { x: 605, y: 767, r: 9, bar: 5, a: -35 },
  { x: 384, y: 878, r: 7, bar: 6, a: -25 },
  { x: 629, y: 878, r: 7, bar: 6, a: 25 },
  { x: 455, y: 961, r: 5, bar: 6, a: -50 },
  { x: 558, y: 961, r: 5, bar: 6, a: 50 },
];

function Ring() {
  const speckles = Array.from({ length: 520 }, (_, i) => ({
    x: 484 + ((i * 37) % 46),
    y: 692 + ((i * 61 + ((i * i) % 17)) % 38),
    dark: i % 3 !== 0,
  }));
  return (
    <g>
      {/* Band */}
      <path
        d="M507 704.600a137 137 0 1 0 .1 0z M507 735.500a114 114 0 1 1 -.1 0z"
        fill="#5cfafb"
        fillRule="evenodd"
        stroke="#1ee8ee"
        strokeWidth="3"
      />
      <circle cx="507" cy="846" r="126" fill="none" stroke="#20d8de" strokeWidth="1" />
      {[100, 80, 68, 55, 42, 30, 20, 10, 5, 0, -5, -10, -20, -30, -42, -55, -68, -80, -100, -112, 112].map((a) => (
        <path key={a} d="M507 963v16" stroke="#20d8de" transform={`rotate(${a} 507 845)`} />
      ))}

      {/* Head plates */}
      <rect x="454" y="685" width="106" height="30" fill="#5b9698" stroke="#4fb3b6" strokeWidth="4" />
      <path d="M466 687v26M475 687v26M538 687v26M548 687v26" stroke="#4bb9bc" />
      <path d="M431 729c16-10 28-16 42-20v30c-16 6-28 12-42 23z" fill="#adf6cf" stroke="#4f8c70" />
      <path d="M582 729c-16-10-28-16-42-20v30c16 6 28 12 42 23z" fill="#adf6cf" stroke="#4f8c70" />
      <path d="M446 720l17-8v31l-17 8zM567 720l-17-8v31l17 8z" fill="#75b896" />
      <path d="M463 712l10-3v30l-10 4zM550 712l-10-3v30l10 4z" fill="#86cda5" />
      <path d="M478 685h57v50c-19-3-38-3-57 0z" fill="#52a9ac" stroke="#45b2b5" strokeWidth="3" />
      <path d="M480 689h53" stroke="#7dd6d8" strokeWidth="1" />

      {/* Lion */}
      <path d="M483 684c9-3 12-10 15-17 1-7 4-6 9-6s8-1 9 6c3 7 6 14 15 17z" fill="#178a22" />
      <path d="M490 682c6-4 8-9 9-14M503 664v20M510 663v20M514 668c1 6 5 10 9 14M498 674h18M495 679h24" fill="none" stroke="#0a5a12" strokeDasharray="2 1" />
      <path d="M501 665h12M500 670h14" stroke="#3ed444" strokeDasharray="1 2" strokeWidth="2" />
      <rect x="484" y="692" width="46" height="38" fill="#23791f" />
      {speckles.map((s, i) => (
        <rect key={i} x={s.x} y={s.y} width="1" height="1" fill={s.dark ? '#0b4a0d' : '#5bdc55'} />
      ))}
      <g fill="#38c236" opacity="0.85">
        <ellipse cx="501" cy="703" rx="3" ry="4" />
        <ellipse cx="512" cy="703" rx="3" ry="4" />
        <ellipse cx="493" cy="711" rx="2" ry="3" />
        <ellipse cx="520" cy="711" rx="2" ry="3" />
        <path d="M497 727c1-6 5-10 10-13 5 3 9 7 10 13-6 1-14 1-20 0z" />
      </g>
      <path d="M471 729h5M538 729h5" stroke="#000" strokeWidth="2" />

      {/* Stones */}
      {stones.map((s) => (
        <g key={`${s.x}-${s.y}`} transform={`translate(${s.x} ${s.y}) rotate(${s.a})`}>
          <circle r={s.r} fill="#f5f5f5" stroke="#000" strokeWidth="2.5" />
          <path d={`M${-s.r} 0h${2 * s.r}M0 ${-s.r}v${2 * s.r}`} stroke="#000" />
          <rect x={-s.r} y={-s.bar / 2} width={2 * s.r} height={s.bar} fill="#141414" />
        </g>
      ))}
      {[453, 560].map((x) => (
        <g key={x} transform={`translate(${x} 728)`} fill="none" stroke="#000" strokeWidth="2">
          <ellipse rx="5" ry="9" fill="#333" fillOpacity="0.4" />
          <path d={x < 500 ? 'M-4 -6l8 11M-4 0l6 8M0 -8l4 8' : 'M4 -6l-8 11M4 0l-6 8M0 -8l-4 8'} />
        </g>
      ))}
    </g>
  );
}

/* Drawing space: the world origin sits at (507, 849) */
function Viewport() {
  return (
    <div className="relative min-h-0 flex-1 overflow-hidden bg-[#9da3ab]">
      <svg className="block h-full w-full">
        <defs>
          <pattern id="minor" width="9.4" height="9.4" patternUnits="userSpaceOnUse" x="506.5" y="848.5">
            <path d="M9.4 0.5H0.5V9.4" fill="none" stroke="#939aa2" strokeWidth="1" />
          </pattern>
          <pattern id="major" width="94" height="94" patternUnits="userSpaceOnUse" x="506" y="848">
            <path d="M94 0.5H0.5V94" fill="none" stroke="#7e858e" strokeWidth="1" />
          </pattern>
        </defs>
        <g transform="translate(-100 -235)">
          <rect x="0" y="0" width="5000" height="3000" fill="url(#minor)" />
          <rect x="0" y="0" width="5000" height="3000" fill="url(#major)" />
          <path d="M507 0v849" stroke="#3d8f45" strokeWidth="1.5" />
          <path d="M507 849h5000" stroke="#9c3b46" strokeWidth="1.5" />
          <path d="M391.5 528v240M622.5 528v240M109 622.5h1915" stroke="#000" />
          <path d="M109 552v140l282-70zM904 552v140l-282-70z" />
          <Ring />
          <text x="1138" y="545" fontFamily="Liberation Sans, Arial, sans-serif" fontSize="332">24.60</text>
          <path d="M154.5 1099v45.5h44" fill="none" stroke="#52585e" />
          <g fill="#565b61" fontFamily="Liberation Sans, Arial, sans-serif" fontSize="16">
            <text x="158" y="1101">Z</text>
            <text x="203" y="1146">X</text>
          </g>
        </g>
      </svg>
      <div className="absolute top-0 left-0 flex h-[27px] items-center bg-[#849be9] text-[#1b2c5e]">
        <span className="pr-2 pl-[10px] font-bold">Front</span>
        <button aria-label="Viewport menu" className="flex h-6 items-center border-l border-[#1b2c5e] px-[3px]">
          <svg viewBox="0 0 10 6" className="h-[6px] w-[10px]"><path d="M0 0h10L5 6z" fill="#1b2c5e" /></svg>
        </button>
      </div>
    </div>
  );
}

function ViewportTabs() {
  return (
    <div className="flex h-[35px] items-start pl-[14px] leading-9">
      <button className="h-8">Perspective</button>
      <button className="ml-[22px] h-8">Top</button>
      <svg viewBox="0 0 28 32" className="-ml-[6px] h-8 w-7" fill="none" stroke="#bfc4d2"><path d="M0 0l26 31.500h2" /></svg>
      <button className="h-8 rounded-br border-r border-b border-[#bfc4d2] pr-[6px] pl-[2px]">Front</button>
      <button className="ml-[18px] h-8">Right</button>
      <button aria-label="Add viewport" className="ml-6 flex h-9 items-center">
        <svg viewBox="0 0 14 14" className="h-[14px] w-[14px]"><path d="M5 1h4v4h4v4H9v4H5V9H1V5h4z" fill="#fff" stroke="#7c7f85" /></svg>
      </button>
    </div>
  );
}

function LayerIcon({ kind, glow }: { kind: 'bulb' | 'lock'; glow?: boolean }) {
  const path =
    kind === 'bulb'
      ? 'M6 12C-1 6 4 1 8 1s9 5 2 11v4l-2 3-2-3z'
      : 'M1 8h12v11H1zM11 8V4c0-4 6-4 6 0v3';
  return (
    <svg viewBox="-1 0 20 20" className="mx-auto h-5 w-5">
      {glow && <path d={path} fill="#fff" stroke="#fff" strokeWidth="4" />}
      {kind === 'bulb' ? (
        <path d={path} fill="#ffe784" stroke="#6d5a1c" strokeWidth="1.3" />
      ) : (
        <g>
          <path d="M11 8V4c0-4 6-4 6 0v3" fill="none" stroke="#222" strokeWidth="1.7" />
          <path d="M1 8h12v11H1z" fill="#ffd93a" stroke="#7b5f0c" strokeWidth="1.3" />
        </g>
      )}
    </svg>
  );
}

function LayersPanel() {
  return (
    <aside className="flex w-[508px] shrink-0 flex-col pt-1 pr-[2px] pb-[6px]">
      <div className="flex h-6 items-center gap-2 pl-[2px]">
        <h2>Layers</h2>
        <div className="h-[3px] flex-1 border-t border-b border-[#cdd1db]" />
      </div>
      <div className="flex h-[34px]">
        {panelTabs.map((t, i) => (
          <button
            key={t.name}
            aria-label={t.name}
            className={
              i === 5
                ? 'flex w-[66px] items-center justify-center border-t border-r border-l border-[#bcc4d6]'
                : 'flex w-[66px] items-center justify-center border-b border-[#bcc4d6]'
            }
          >
            <svg viewBox="0 0 32 32" className="mt-1 h-6 w-6">{t.icon}</svg>
          </button>
        ))}
        <div className="flex flex-1 items-center justify-end border-b border-[#bcc4d6]">
          <button aria-label="Panel options"><Gear className="mt-1 h-[22px] w-[22px] stroke-[#c3c9d8]" /></button>
        </div>
      </div>
      <div className="flex min-h-0 flex-1 flex-col border-r border-b border-l border-[#bcc4d6]">
        <div className="flex h-[55px] items-center border-b border-[#bcc4d6] pt-[2px] pl-[9px]">
          {layerTools.map((t) => (
            <button key={t.name} aria-label={t.name} className="flex w-8 justify-center">
              <svg viewBox="0 0 36 34" className="h-6 w-[26px]">
                {t.icon}
                {t.more && <path d="M35 27v7h-7z" fill={t.name === 'State' ? '#888' : '#000'} />}
              </svg>
            </button>
          ))}
        </div>
        <div className="flex-1 border-r-4 border-[#eeeff3] bg-white">
          <table className="w-[475px] table-fixed border-collapse text-[#2d2d2d]">
            <colgroup>
              <col className="w-[110px]" />
              <col className="w-[25px]" />
              <col className="w-[25px]" />
              <col className="w-[25px]" />
              <col className="w-[25px]" />
              <col className="w-[80px]" />
              <col className="w-[80px]" />
              <col className="w-[25px]" />
              <col className="w-[80px]" />
            </colgroup>
            <thead>
              <tr className="h-[31px] text-left">
                {['Layer', '', '', '', '', 'Material', 'Linetype', '', 'Print W...'].map((h, i) => (
                  <th key={i} className="border-r border-[#dfe1e6] pl-1 font-normal whitespace-nowrap text-[#444]">{h}</th>
                ))}
              </tr>
            </thead>
            <tbody>
              {layers.map((l) => (
                <tr
                  key={l.name}
                  className={
                    l.selected
                      ? 'h-[29px] bg-[#849be7] text-[#2c3766]'
                      : l.current
                        ? 'h-[29px] border-b border-[#ededee] font-bold'
                        : 'h-[29px] border-b border-[#ededee]'
                  }
                >
                  <td className="pl-2 whitespace-nowrap">{l.name}</td>
                  <td>
                    {l.current && (
                      <svg viewBox="0 0 20 14" className="mx-auto h-[14px] w-5" fill="none" stroke="#000" strokeWidth="2"><path d="M1 7l6 6L19 1" /></svg>
                    )}
                  </td>
                  <td>{!l.current && <LayerIcon kind="bulb" glow={l.selected} />}</td>
                  <td>{!l.current && <LayerIcon kind="lock" glow={l.selected} />}</td>
                  <td>
                    <div
                      className={l.selected ? 'mx-auto h-[18px] w-[18px] border border-white' : 'mx-auto h-[18px] w-[18px] border border-[#333]'}
                      style={{ backgroundColor: l.color }}
                    />
                  </td>
                  <td className="pl-1">
                    <div className={l.selected ? 'h-[22px] w-[22px] rounded-full bg-white' : 'h-[22px] w-[22px] rounded-full bg-[#fafafb]'} />
                  </td>
                  <td className="pl-1 whitespace-nowrap">{l.current ? 'Conti...' : 'Contin...'}</td>
                  <td>
                    <svg viewBox="0 0 20 20" className="mx-auto h-5 w-5">
                      <path d="M10 1l9 9-9 9-9-9z" fill={l.color} stroke={l.selected ? '#fff' : '#000'} />
                    </svg>
                  </td>
                  <td className="pl-[5px] whitespace-nowrap">Default</td>
                </tr>
              ))}
            </tbody>
          </table>
        </div>
      </div>
    </aside>
  );
}

function SnapBox({ snap, group }: { snap: Snap; group: string }) {
  const id = `${group}-${snap.label}`;
  return (
    <div className={`flex items-center ${snap.wide ?? ''}`}>
      <span className="grid place-items-center">
        <input
          id={id}
          type="checkbox"
          defaultChecked={snap.state === 'on'}
          disabled={snap.state === 'disabled'}
          className="peer col-start-1 row-start-1 h-5 w-5 appearance-none border border-[#222] bg-white disabled:mr-[2px] disabled:h-[18px] disabled:w-[18px] disabled:border-[#b9b9b9] disabled:bg-[#dfdfdf]"
        />
        <svg viewBox="0 0 20 20" className="pointer-events-none invisible col-start-1 row-start-1 h-5 w-5 peer-checked:visible" fill="none" stroke="#222" strokeWidth="1.8">
          <path d="M4 10l4 4 8-9" />
        </svg>
      </span>
      <label htmlFor={id} className="pl-[5px] whitespace-nowrap">{snap.label}</label>
    </div>
  );
}

function StatusBar() {
  return (
    <footer className="flex h-[25px] items-center overflow-hidden border-t border-[#c3c8d4] text-center leading-[26px]">
      <button className="w-[68px] bg-[#d2dbf0] font-bold">World</button>
      <span className="w-32 border-l border-[#c3c8d4]">x 20.771</span>
      <span className="w-32 border-l border-[#c3c8d4]">y</span>
      <span className="w-32 border-l border-[#c3c8d4]">z 12.580</span>
      <button className="w-32 border-l border-[#c3c8d4]">Millimeters</button>
      <button className="flex w-[248px] items-center gap-[3px] border-l border-[#c3c8d4] pl-1">
        <span className="h-[17px] w-[17px] bg-black" />
        Default
      </button>
      {modes.map((m) => (
        <button
          key={m.label}
          className={m.on ? 'border-l border-[#c3c8d4] bg-[#d2dbf0] px-[5px] font-bold whitespace-nowrap' : 'border-l border-[#c3c8d4] px-2 whitespace-nowrap'}
        >
          {m.label}
        </button>
      ))}
      <span className="flex-1 border-l border-[#c3c8d4] pl-px text-left">Memory use: 940 MB</span>
      <span className="w-2 border-l border-[#c3c8d4]">&nbsp;</span>
    </footer>
  );
}

function Taskbar() {
  return (
    <nav className="flex h-[62px] shrink-0 items-center justify-between bg-[linear-gradient(90deg,#203433_0%,#223536_60%,#1f3436_70%,#2f3f43_82%,#1f302e_92%,#1b2c29_100%)] text-white">
      <div className="flex h-full">
        <button aria-label="Start" className="flex w-[72px] items-center justify-center">
          <svg viewBox="0 0 24 24" className="h-6 w-6" fill="#fff"><path d="M0 4l10-2v9H0zM11 2l13-2v11H11zM0 12h10v9L0 20zM11 12h13v12l-13-2z" /></svg>
        </button>
        <button aria-label="Search" className="flex w-[72px] items-center justify-center">
          <svg viewBox="0 0 34 34" className="h-[34px] w-[34px]" fill="none" stroke="#fff" strokeWidth="3"><circle cx="20" cy="14" r="12" /><path d="M11 23L2 32" /></svg>
        </button>
        <button aria-label="Task view" className="flex w-[72px] items-center justify-center">
          <svg viewBox="0 0 26 26" className="h-[26px] w-[26px]" fill="none" stroke="#fff" strokeWidth="1.5">
            <path d="M1 1v5h16V1M1 25v-4h16v4M1 9h16v9H1zM23 1v6M23 13v12" />
            <rect x="22" y="9" width="2" height="2" fill="#fff" />
          </svg>
        </button>
        <button aria-label="Chrome" className="flex w-[80px] items-center justify-center">
          <svg viewBox="0 0 36 36" className="h-9 w-9">
            <path d="M18 18L2.4 9A18 18 0 0 1 33.600 9z" fill="#db4437" />
            <path d="M18 18v18A18 18 0 0 1 2.400 9z" fill="#0f9d58" />
            <path d="M18 10V9h15.600a18 18 0 0 1-15.600 27l7-14z" fill="#ffcd40" />
            <circle cx="18" cy="18" r="8.500" fill="#fff" />
            <circle cx="18" cy="18" r="6.500" fill="#4285f4" />
          </svg>
        </button>
        <button aria-label="File Explorer" className="ml-[6px] flex w-[61px] items-center justify-center border-b-3 border-[#76b9ed]">
          <svg viewBox="0 0 32 28" className="h-7 w-8">
            <path d="M0 2l2-2h10l3 4v6H0z" fill="#e09c1c" />
            <path d="M0 5h32v20H0z" fill="#ffd868" />
            <path d="M5 26V16l3-3h16l3 3v10h-6v-6H11v6z" fill="#3f93c8" />
            <path d="M5 13h22" stroke="#69b9e6" />
          </svg>
        </button>
        <button aria-label="ZBrush" className="ml-[14px] flex w-[61px] items-center justify-center border-b-3 border-[#76b9ed]">
          <svg viewBox="0 0 36 36" className="h-9 w-9">
            <rect width="36" height="36" rx="2" fill="url(#paper)" />
            <circle cx="22" cy="7" r="3" fill="#222" />
            <path
              d="M6 12c3-2 6-1 9-1l5 3-3 6 8 2 5 6M20 14l5 3 6-2M17 20l-6 3-5 6M2 32c6-5 14-5 20-3 4 1 8 1 11-1"
              fill="none"
              stroke="#222"
              strokeWidth="3"
              strokeLinejoin="round"
            />
          </svg>
        </button>
        <button aria-label="Rhinoceros 7" className="ml-2 flex w-[73px] items-center justify-center border-b-3 border-[#76b9ed] bg-[#515f60]">
          <RhinoLogo className="h-9 w-9" />
        </button>
      </div>
      <div className="flex h-full items-center">
        <button className="flex items-center pt-1 text-[19px]">
          <svg viewBox="0 0 36 34" className="mr-3 h-[34px] w-9">
            <circle cx="19" cy="18" r="15" fill="url(#sun)" />
            <path d="M4 14a4 4 0 0 1 1-8 6 6 0 0 1 11 0 4 4 0 0 1 1 8z" fill="url(#cloud)" />
            <path d="M20 32a5 5 0 0 1 1-9 6 6 0 0 1 11 1 4 4 0 0 1 0 8z" fill="url(#cloud)" />
          </svg>
          <span className="pr-[14px]">9°C</span>
          <span>Partly sunny</span>
        </button>
        <div className="ml-9 flex items-center gap-[12px]">
          <button aria-label="Hidden icons"><svg viewBox="0 0 24 24" className="h-6 w-6" fill="none" stroke="#fff" strokeWidth="1.6"><path d="M4 16l8-8 8 8" /></svg></button>
          <svg viewBox="0 0 24 24" className="h-6 w-6" fill="none" stroke="#fff" strokeWidth="1.5"><path d="M6 6h10v12H6zM16 10l5-3v10l-5-3M7 3c3-2 6-2 9 0M7 21c3 2 6 2 9 0" /></svg>
          <svg viewBox="0 0 26 24" className="h-6 w-[26px]">
            <path d="M4 16a5 5 0 0 1 1-9 7 7 0 0 1 13-2 5 5 0 0 1 4 6v5z" fill="#d7d9da" />
            <circle cx="18" cy="16" r="7" fill="#fff" stroke="#3585c4" />
            <path d="M14 16a4 4 0 0 1 7-2M22 16a4 4 0 0 1-7 2M21 11v3h-3M15 21v-3h3" fill="none" stroke="#1976bd" strokeWidth="1.5" />
          </svg>
          <svg viewBox="0 0 26 24" className="h-6 w-[26px]" fill="none" stroke="#fff" strokeWidth="1.5"><path d="M7 6h16v12H7zM23 10h2v4h-2M4 10v9h3M2 3v4c0 3 5 3 5 0V3" /><path d="M9 8h12v8H9z" fill="#fff" /></svg>
          <svg viewBox="0 0 24 24" className="h-6 w-6" fill="none" stroke="#fff" strokeWidth="1.3"><path d="M2 22C2 11 10 3 21 3" stroke="#889" /><path d="M7 22C7 14 13 8 21 8M12 22c0-5 4-9 9-9M16 22c0-3 2-5 5-5" /><circle cx="20" cy="21" r="1.5" fill="#fff" /></svg>
          <svg viewBox="0 0 24 24" className="h-6 w-6" fill="none" stroke="#fff" strokeWidth="1.5"><path d="M1 9h3l5-5v16l-5-5H1zM12 9c2 2 2 4 0 6" /><path d="M15 6c4 4 4 8 0 12M18 4c5 5 5 11 0 16" stroke="#7b8788" /></svg>
          <svg viewBox="0 0 24 24" className="ml-1 h-6 w-6" fill="none" stroke="#fff" strokeWidth="1.5"><path d="M8 17L18 2c2-1 4 1 3 3L11 20l-4 2zM8 12c-5 0-7 5-5 8 3 3 8-2 7-5M17 13c2-3 5-2 4 0s-5 2-5 0" /></svg>
        </div>
        <button className="ml-[21px] pt-px">ENG</button>
        <button className="ml-[19px] flex h-full flex-col justify-center gap-1 pt-[2px] text-center">
          <span className="block w-full">12:45</span>
          <span className="block w-full">04.02.2024</span>
        </button>
        <button aria-label="Notifications" className="mr-[25px] ml-[28px] flex pt-[2px]">
          <svg viewBox="0 0 38 38" className="h-[38px] w-[38px]">
            <path d="M1 3h25v19H15l-5 6v-6H1z" fill="#fff" />
            <path d="M6 8h15M6 12h15M6 16h10" stroke="#1f302e" strokeWidth="1.5" />
            <circle cx="25" cy="25" r="11" fill="#2c2f30" stroke="#8a9090" />
            <text x="25" y="31" textAnchor="middle" fontSize="16" fontWeight="600" fill="#fff">3</text>
          </svg>
        </button>
      </div>
    </nav>
  );
}

export default function App() {
  return (
    <div className="relative flex h-screen flex-col overflow-hidden bg-[#ebecf0] font-['Open_Sans','Noto_Sans',sans-serif] text-[17px] leading-6 text-[#2a2c30]">
      <Defs />
      <TitleBar />
      <CommandArea />
      <Toolbars />
      <main className="flex min-h-0 flex-1">
        <div className="w-[100px] shrink-0 pt-[4px]">
          <div className="ml-[3px] h-[3px] w-[90px] border-t border-b border-[#d0d4de]" />
          <div className="mt-[2px] grid w-[84px] grid-cols-2">
            {sideTools.map((t) => (
              <ToolButton key={t.name} tool={t} />
            ))}
          </div>
        </div>
        <div className="flex min-w-0 flex-1 flex-col">
          <Viewport />
          <ViewportTabs />
        </div>
        <div className="w-[10px] shrink-0" />
        <LayersPanel />
      </main>
      <section className="flex h-[42px] items-center border-b border-[#d3d6df] pt-[3px] pl-[6px]">
        <div className="flex h-8 items-center gap-[10px] border-l border-[#d3d6df] pl-[7px]">
          {osnaps.map((s) => (
            <SnapBox key={s.label} snap={s} group="osnap" />
          ))}
        </div>
      </section>
      <section className="h-[78px] pt-[3px] pl-[6px]">
        <div className="flex h-[73px] items-start gap-[11px] border-l border-[#d3d6df] pt-[5px] pl-[7px]">
          {filters.map((s) => (
            <SnapBox key={s.label} snap={s} group="filter" />
          ))}
        </div>
      </section>
      <StatusBar />
      <Taskbar />
      {/* Activation watermark over the desktop */}
      <div className="pointer-events-none absolute right-[90px] bottom-[123px] w-[536px] text-[#b3b5b9]">
        <p className="text-[28px] leading-10">Активация Windows</p>
        <p className="text-[21px] leading-[30px]">Чтобы активировать Windows, перейдите в раздел &quot;Параметры&quot;.</p>
      </div>
    </div>
  );
}
